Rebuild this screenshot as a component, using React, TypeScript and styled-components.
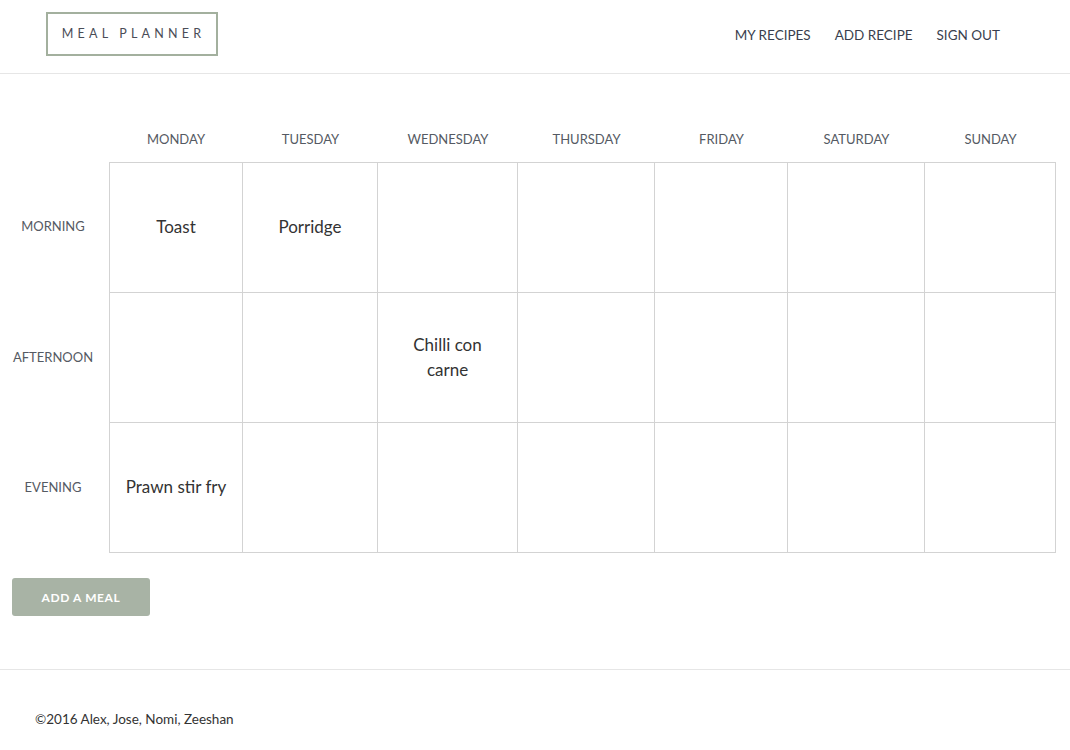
import React from "react";
import styled, { createGlobalStyle } from "styled-components";

const GlobalStyle = createGlobalStyle`
  html, body { margin: 0; padding: 0; background: #fff; }
  body { font-family: Lato, "Open Sans", sans-serif; color: #333; }
  * { box-sizing: border-box; }
`;

const Header = styled.header`
  height: 74px;
  border-bottom: 1px solid #e6e6e6;
  display: flex;
  align-items: center;
  justify-content: space-between;
  padding: 0 70px 0 46px;
`;

const Logo = styled.div`
  width: 172px;
  height: 44px;
  border: 2px solid #a3b09e;
  display: flex;
  align-items: center;
  justify-content: center;
  font-size: 12.5px;
  letter-spacing: 4.2px;
  color: #4a4d57;
  padding-left: 3px;
  margin-top: -6px;
`;

const Nav = styled.nav`
  display: flex;
  gap: 24px;
  margin-top: -4px;
`;

const NavLink = styled.a`
  font-size: 13.5px;
  color: #3a3f4e;
  text-decoration: none;
  cursor: pointer;
`;

const Main = styled.main`
  padding: 42px 15px 0 0;
`;

const Grid = styled.div`
  display: grid;
  grid-template-columns: 109px 134px 135px 140px 137px 133px 137px 131px;
  grid-template-rows: 46px 131px 130px 130px;
`;

const DayHead = styled.div`
  display: flex;
  align-items: center;
  justify-content: center;
  font-size: 13px;
  color: #555a63;
  padding-bottom: 1px;
`;

const RowLabel = styled.div`
  display: flex;
  align-items: center;
  justify-content: center;
  font-size: 13px;
  color: #555a63;
  padding: 0 3px 3px 0;
`;

const Cell = styled.div<{ $first?: boolean; $top?: boolean }>`
  display: flex;
  align-items: center;
  justify-content: center;
  text-align: center;
  border-right: 1px solid #d3d3d3;
  border-bottom: 1px solid #d3d3d3;
  border-left: ${(p) => (p.$first ? "1px solid #d3d3d3" : "none")};
  border-top: ${(p) => (p.$top ? "1px solid #d3d3d3" : "none")};
  font-size: 17px;
  line-height: 25px;
  color: #333;
  padding-bottom: 2px;
`;

const Meal = styled.span`
  max-width: 108px;
`;

const AddButton = styled.button`
  margin: 25px 0 0 12px;
  width: 138px;
  height: 38px;
  border: none;
  border-radius: 3px;
  background: #a8b3a5;
  color: #fff;
  font-family: Lato, sans-serif;
  font-weight: 700;
  font-size: 12px;
  letter-spacing: 0.6px;
  cursor: pointer;
`;

const Footer = styled.footer`
  margin-top: 53px;
  border-top: 1px solid #e6e6e6;
  padding: 41px 0 0 35px;
  font-size: 13.5px;
  color: #333;
`;

const days = ["MONDAY", "TUESDAY", "WEDNESDAY", "THURSDAY", "FRIDAY", "SATURDAY", "SUNDAY"];
const rows: { label: string; meals: string[] }[] = [
  { label: "MORNING", meals: ["Toast", "Porridge", "", "", "", "", ""] },
  { label: "AFTERNOON", meals: ["", "", "Chilli con carne", "", "", "", ""] },
  { label: "EVENING", meals: ["Prawn stir fry", "", "", "", "", "", ""] },
];

export default function App() {
  return (
    <>
      <GlobalStyle />
      <Header>
        <Logo>MEAL PLANNER</Logo>
        <Nav>
          <NavLink>MY RECIPES</NavLink>
          <NavLink>ADD RECIPE</NavLink>
          <NavLink>SIGN OUT</NavLink>
        </Nav>
      </Header>
      <Main>
        <Grid>
          <div />
          {days.map((d) => (
            <DayHead key={d}>{d}</DayHead>
          ))}
          {rows.map((r, ri) => (
            <React.Fragment key={r.label}>
              <RowLabel>{r.label}</RowLabel>
              {r.meals.map((m, ci) => (
                <Cell key={ci} $first={ci === 0} $top={ri === 0}>
                  {m && <Meal>{m}</Meal>}
                </Cell>
              ))}
            </React.Fragment>
          ))}
        </Grid>
        <AddButton>ADD A MEAL</AddButton>
      </Main>
      <Footer>©2016 Alex, Jose, Nomi, Zeeshan</Footer>
    </>
  );
}
